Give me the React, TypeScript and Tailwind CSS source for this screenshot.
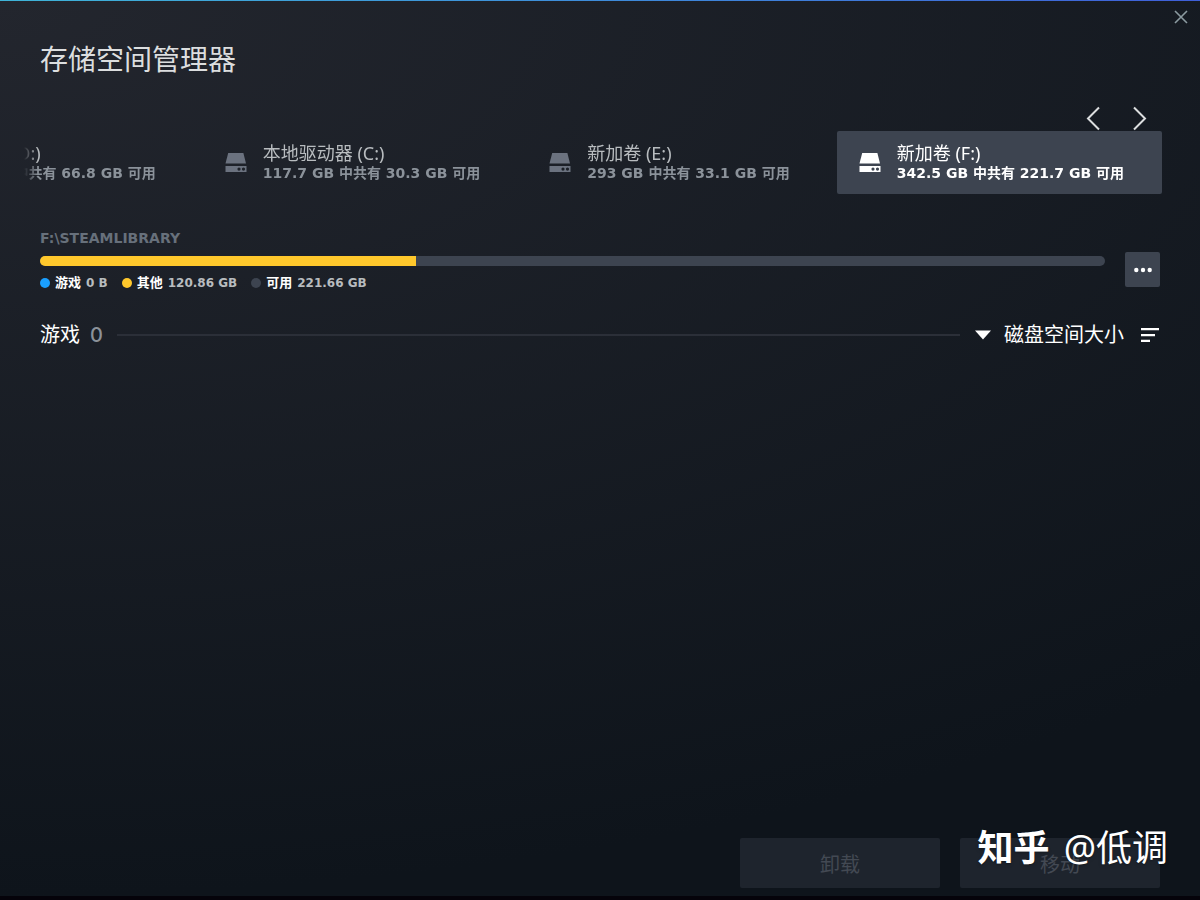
import React, { useState } from "react";

type Drive = {
    name: string;
    space: string;
};

const drives: Drive[] = [
    { name: "新加卷 (D:)", space: "293 GB 中共有 66.8 GB 可用" },
    { name: "本地驱动器 (C:)", space: "117.7 GB 中共有 30.3 GB 可用" },
    { name: "新加卷 (E:)", space: "293 GB 中共有 33.1 GB 可用" },
    { name: "新加卷 (F:)", space: "342.5 GB 中共有 221.7 GB 可用" },
];

const usage = [
    { label: "游戏", value: "0 B", dot: "bg-[#1a9fff]" },
    { label: "其他", value: "120.86 GB", dot: "bg-[#ffc82c]" },
    { label: "可用", value: "221.66 GB", dot: "bg-[#3d4450]" },
];

function DriveIcon() {
    return (
        <svg width="22" height="20" viewBox="0 0 22 20" fill="currentColor" className="shrink-0" aria-hidden="true">
            <path d="M3.2 0h15.2L21 10.500H0.500z" />
            <path
                fillRule="evenodd"
                d="M0.5 13h21V19h-21zM14 14.500a1.600 1.600 0 1 0 0 3.200a1.600 1.600 0 1 0 0-3.200zM18.500 14.500a1.600 1.600 0 1 0 0 3.200a1.600 1.600 0 1 0 0-3.200z"
            />
        </svg>
    );
}

function DriveTab({ drive, active, onSelect }: { drive: Drive; active: boolean; onSelect: () => void }) {
    return (
        <button
            type="button"
            role="tab"
            aria-selected={active}
            onClick={onSelect}
            className={`flex shrink-0 items-center gap-4 rounded-xs py-3 pr-[38px] pl-[22px] text-left whitespace-nowrap ${
                active ? "bg-[#3d4450] text-white" : "text-[#6b727f]"
            }`}
        >
            <DriveIcon />
            <span className="flex flex-col">
                <span className={`text-lg leading-[21px] font-normal ${active ? "text-white" : "text-[#b8bcbf]"}`}>{drive.name}</span>
                <span
                    className={`font-['DejaVu_Sans','Noto_Sans_CJK_SC',sans-serif] text-sm leading-[18px] font-bold ${
                        active ? "text-white" : "text-[#8b929a]"
                    }`}
                >
                    {drive.space}
                </span>
            </span>
        </button>
    );
}

export default function App() {
    const [selected, setSelected] = useState(3);

    const step = (n: number) => setSelected((s) => Math.min(drives.length - 1, Math.max(0, s + n)));

    return (
        <main className="relative flex min-h-screen flex-col border-b-4 border-[#05030a] bg-[radial-gradient(155%_100%_at_0%_0%,#23262e_0%,#0e141b_100%)] font-['Noto_Sans','Noto_Sans_CJK_SC',sans-serif] text-white">
            <div className="h-px bg-linear-to-r from-[#3fb4d8] to-[#3f5fd8]" />

            <header className="flex items-start justify-between pr-3 pl-10">
                <h1 className="pt-9 text-[28px] leading-11 text-[#dcdedf]">存储空间管理器</h1>
                <button type="button" aria-label="关闭" className="pt-[9px] text-[#8b9aa0]">
                    <svg width="14" height="14" viewBox="0 0 14 14" fill="none" stroke="currentColor" strokeWidth="1.6">
                        <path d="M1 1l12 12M13 1L1 13" />
                    </svg>
                </button>
            </header>

            <div className="mt-6 flex justify-end gap-8 pr-[52px] text-[#dcdedf]">
                <button type="button" aria-label="上一个" onClick={() => step(-1)}>
                    <svg width="16" height="26" viewBox="0 0 16 26" fill="none" stroke="currentColor" strokeWidth="2">
                        <path d="M15 2.500L4 13.500L15 24.500" />
                    </svg>
                </button>
                <button type="button" aria-label="下一个" onClick={() => step(1)}>
                    <svg width="16" height="26" viewBox="0 0 16 26" fill="none" stroke="currentColor" strokeWidth="2">
                        <path d="M2 2.500L13 13.500L2 24.500" />
                    </svg>
                </button>
            </div>

            <div
                role="tablist"
                className="mr-[38px] ml-6 flex justify-end gap-[9px] overflow-hidden mask-l-from-[calc(100%-14px)] mask-l-to-100%"
            >
                {drives.map((drive, i) => (
                    <DriveTab key={drive.name} drive={drive} active={i === selected} onSelect={() => setSelected(i)} />
                ))}
            </div>

            <section className="mt-9 flex gap-5 px-10">
                <div className="flex-1 font-['DejaVu_Sans','Noto_Sans_CJK_SC',sans-serif] font-bold">
                    <h2 className="text-sm leading-4 text-[#67707b] uppercase">F:\SteamLibrary</h2>
                    <div className="mt-[10px] flex h-[10px] overflow-hidden rounded-full bg-[#3d4450]">
                        <div className="bg-[#ffc82c]" style={{ width: `${(120.86 / 342.52) * 100}%` }} />
                    </div>
                    <ul className="mt-2 flex gap-[14px] text-[13px] leading-[18px]">
                        {usage.map((u) => (
                            <li key={u.label} className="flex items-center gap-[5px]">
                                <span className={`size-[10px] rounded-full ${u.dot}`} />
                                <span>{u.label}</span>
                                <span className="text-xs leading-[18px] text-[#b8bcbf]">{u.value}</span>
                            </li>
                        ))}
                    </ul>
                </div>
                <button
                    type="button"
                    aria-label="更多"
                    className="mb-[5px] flex size-[35px] items-center justify-center self-end rounded-xs bg-[#3d4450]"
                >
                    <svg width="18" height="6" viewBox="0 0 18 6" fill="currentColor">
                        <circle cx="2.300" cy="3" r="2.200" />
                        <circle cx="9" cy="3" r="2.200" />
                        <circle cx="15.700" cy="3" r="2.200" />
                    </svg>
                </button>
            </section>

            <section className="mt-[27px] flex items-center px-10 text-xl leading-8">
                <h2>游戏</h2>
                <span className="ml-[10px] font-['Inter',sans-serif] font-medium text-[#8b929a]">0</span>
                <div className="mx-[14px] h-0.5 flex-1 bg-[#2b2f38]" />
                <button type="button" className="flex items-center gap-3">
                    <svg width="18" height="10" viewBox="0 0 18 10" fill="currentColor" aria-hidden="true">
                        <path d="M1 0.500h16L9 9.500z" />
                    </svg>
                    磁盘空间大小
                </button>
                <button type="button" aria-label="排序" className="ml-4">
                    <svg width="20" height="14" viewBox="0 0 20 14" fill="currentColor">
                        <path d="M1 0h18v2.200H1zM1 6h14v2.200H1zM1 11.800h9V14H1z" />
                    </svg>
                </button>
            </section>

            <footer className="mt-auto flex justify-end gap-5 px-10 pb-2 text-xl text-[#434953]">
                <button type="button" disabled className="h-[50px] w-[200px] rounded-xs bg-[#1e242d] pt-1">
                    卸载
                </button>
                <button type="button" disabled className="h-[50px] w-[200px] rounded-xs bg-[#1e242d] pt-1">
                    移动
                </button>
            </footer>

            <p className="pointer-events-none absolute right-8 bottom-6 flex items-center gap-[14px] text-4xl leading-12 text-white text-shadow-md">
                <span className="font-bold">知乎</span>
                <span>@低调</span>
            </p>
        </main>
    );
}
